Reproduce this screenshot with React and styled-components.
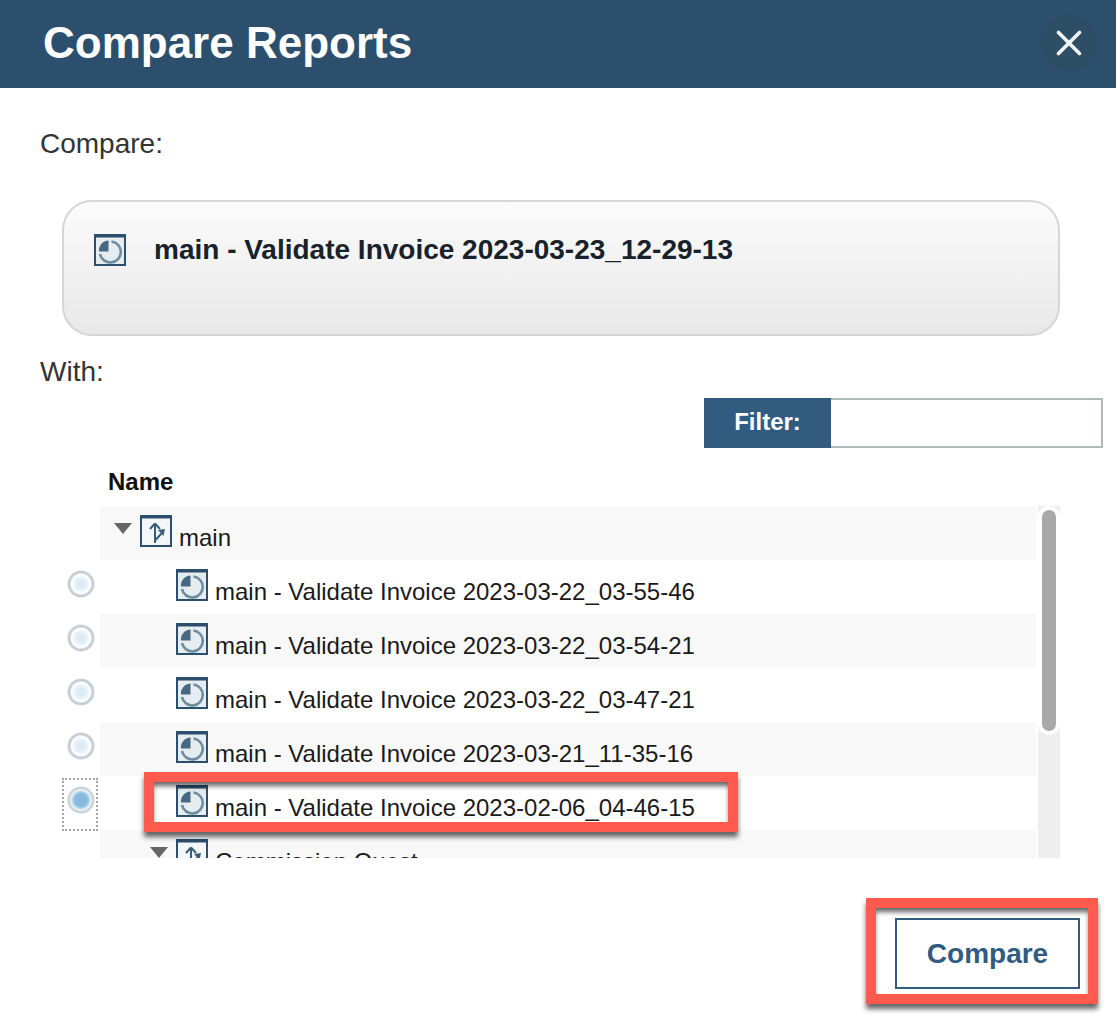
import styled, { createGlobalStyle } from "styled-components";

const GlobalStyle = createGlobalStyle`
  html, body {
    margin: 0;
    padding: 0;
    background: #fff;
    font-family: "Liberation Sans", Arial, sans-serif;
  }
`;

const reports = [
  { name: "main - Validate Invoice 2023-03-22_03-55-46" },
  { name: "main - Validate Invoice 2023-03-22_03-54-21" },
  { name: "main - Validate Invoice 2023-03-22_03-47-21" },
  { name: "main - Validate Invoice 2023-03-21_11-35-16" },
  { name: "main - Validate Invoice 2023-02-06_04-46-15", selected: true },
];

const Dialog = styled.div`
  position: relative;
  width: 1116px;
  height: 1028px;
  overflow: hidden;
  background: #fff;
`;

const Header = styled.header`
  display: flex;
  align-items: center;
  justify-content: space-between;
  height: 88px;
  padding: 0 19px 2px 43px;
  box-sizing: border-box;
  background: #2c4f6e;
`;

const Title = styled.h1`
  margin: 0;
  font-size: 44px;
  font-weight: 700;
  color: #fff;
`;

const CloseButton = styled.button`
  display: flex;
  align-items: center;
  justify-content: center;
  width: 56px;
  height: 56px;
  padding: 0;
  border: 0;
  border-radius: 50%;
  background: #2e4e66;
`;

const Content = styled.div`
  padding: 40px 13px 0 40px;
`;

const Label = styled.div`
  font-size: 28px;
  line-height: 32px;
  color: #333;
`;

const SourceCard = styled.div`
  display: flex;
  align-items: center;
  gap: 28px;
  width: 998px;
  height: 136px;
  box-sizing: border-box;
  margin: 40px 0 20px 22px;
  padding: 0 30px 36px;
  border: 2px solid #d6d6d6;
  border-radius: 30px;
  background: linear-gradient(#fbfbfb, #e8e8e8);
`;

const SourceName = styled.div`
  font-size: 28px;
  line-height: 32px;
  font-weight: 700;
  color: #18222b;
`;

const FilterRow = styled.div`
  display: flex;
  justify-content: flex-end;
  margin-top: 10px;
`;

const FilterLabel = styled.label`
  display: flex;
  align-items: center;
  justify-content: center;
  width: 127px;
  height: 50px;
  box-sizing: border-box;
  padding-bottom: 2px;
  font-size: 24px;
  font-weight: 700;
  color: #fff;
  background: #315c80;
`;

const FilterInput = styled.input`
  width: 272px;
  height: 50px;
  box-sizing: border-box;
  padding: 0 8px;
  border: 2px solid #acbaba;
  border-left: 0;
  outline: 0;
  background: #fff;
`;

const TableHead = styled.div`
  padding: 18px 0 0 68px;
  height: 40px;
  font-size: 24px;
  line-height: 32px;
  font-weight: 700;
  color: #111;
`;

const TreePane = styled.div`
  display: flex;
  align-items: stretch;
  height: 352px;
  overflow: hidden;
`;

const RadioColumn = styled.div`
  flex: 0 0 60px;
  box-sizing: border-box;
  padding: 51px 0 0 23px;
`;

const RadioSlot = styled.div`
  display: flex;
  align-items: center;
  justify-content: center;
  position: relative;
  width: 36px;
  height: 54px;
`;

const FocusRing = styled.div`
  position: absolute;
  left: -1px;
  top: 5px;
  width: 36px;
  height: 53px;
  box-sizing: border-box;
  border: 2px dotted #a6a6a6;
`;

const Radio = styled.span`
  display: block;
  width: 28px;
  height: 28px;
  border-radius: 50%;
  background: ${(p) =>
    p.$checked
      ? "radial-gradient(circle, #86b9de 0 6px, #a9cfe9 8px, #eef4f9 10px, #c6ced6 12px, #ccd4db 13px, #fff 14px)"
      : "radial-gradient(circle at 50% 50%, #dcecf7 0 4px, #eef5fa 7px, #fff 9.5px, #c2cad3 11.5px, #ccd3da 13px, #fff 14px)"};
`;

const Tree = styled.div`
  flex: 0 0 936px;
`;

const Row = styled.div`
  display: flex;
  align-items: flex-start;
  height: 54px;
  box-sizing: border-box;
  padding-left: ${(p) => p.$indent}px;
  background: ${(p) => (p.$shaded ? "#f8f8f8" : "#fff")};
`;

const Caret = styled.span`
  width: 0;
  height: 0;
  margin: 17px 8px 0 0;
  border-left: 9.5px solid transparent;
  border-right: 9.5px solid transparent;
  border-top: 11px solid #666;
`;

const RowIcon = styled.svg`
  flex: none;
  width: 32px;
  height: 32px;
  margin: ${(p) => (p.$flush ? "0" : "9px 7px 0 0")};
`;

const RowName = styled.span`
  padding-top: 17px;
  font-size: 24px;
  line-height: 30px;
  color: #1a1a1a;
  white-space: nowrap;
`;

const Scrollbar = styled.div`
  flex: 0 0 22px;
  margin-left: 2px;
  background: #eeeeee;
`;

const ScrollThumb = styled.div`
  width: 14px;
  height: 221px;
  margin: 4px 0 0 4px;
  border-radius: 7px;
  background: #a9a9a9;
  box-shadow: 0 0 0 4px #fff;
`;

const Footer = styled.div`
  display: flex;
  justify-content: flex-end;
  padding: 60px 23px 0 0;
`;

const CompareButton = styled.button`
  width: 185px;
  height: 71px;
  border: 2px solid #315c80;
  background: #fff;
  font-family: inherit;
  font-size: 28px;
  font-weight: 700;
  color: #315c80;
`;

const Callout = styled.div`
  position: absolute;
  left: ${(p) => p.$x}px;
  top: ${(p) => p.$y}px;
  width: ${(p) => p.$w}px;
  height: ${(p) => p.$h}px;
  box-sizing: border-box;
  border: 10px solid #ff5a4d;
  box-shadow: 0 5px 5px rgba(0, 0, 0, 0.6), inset 0 5px 5px -1px rgba(0, 0, 0, 0.6);
  pointer-events: none;
`;

function CloseIcon() {
  return (
    <svg width="26" height="26" viewBox="0 0 26 26" fill="none">
      <path
        d="M2.5 2.5l21 21M23.5 2.5l-21 21"
        stroke="#f2f5f6"
        strokeWidth="3.6"
        strokeLinecap="round"
      />
    </svg>
  );
}

function ReportIcon({ flush }) {
  return (
    <RowIcon viewBox="0 0 32 32" $flush={flush}>
      <rect x="1" y="1" width="30" height="30" fill="#e6edf1" stroke="#2c4f6e" strokeWidth="2" />
      <rect x="0" y="0" width="32" height="3.5" fill="#2c4f6e" />
      <path
        d="M17.5 7.5A10.5 10.5 0 1 1 6 20"
        fill="none"
        stroke="#6d8c9f"
        strokeWidth="2.6"
      />
      <path d="M14.5 6.5v11H5A9.8 9.8 0 0 1 14.5 6.5z" fill="#2c4f6e" opacity="0.85" />
    </RowIcon>
  );
}

function BranchIcon() {
  return (
    <RowIcon viewBox="0 0 32 32">
      <rect x="1" y="1" width="30" height="30" fill="#f4f7f9" stroke="#2c4f6e" strokeWidth="2" />
      <rect x="0" y="0" width="32" height="3.5" fill="#2c4f6e" />
      <path
        d="M15 28V9M15 8.5l-5 5.5M15 8.5l5 5.5M15.5 25l6-6.5"
        fill="none"
        stroke="#3a5d79"
        strokeWidth="2"
      />
      <path d="M18 15l7-1-1.5 7z" fill="#3a5d79" />
    </RowIcon>
  );
}

export default function App() {
  return (
    <Dialog>
      <GlobalStyle />
      <Header>
        <Title>Compare Reports</Title>
        <CloseButton aria-label="Close">
          <CloseIcon />
        </CloseButton>
      </Header>
      <Content>
        <Label>Compare:</Label>
        <SourceCard>
          <ReportIcon flush />
          <SourceName>main - Validate Invoice 2023-03-23_12-29-13</SourceName>
        </SourceCard>
        <Label>With:</Label>
        <FilterRow>
          <FilterLabel htmlFor="filter">Filter:</FilterLabel>
          <FilterInput id="filter" />
        </FilterRow>
        <TableHead>Name</TableHead>
        <TreePane>
          <RadioColumn>
            {reports.map((r) => (
              <RadioSlot key={r.name}>
                <Radio $checked={r.selected} />
                {r.selected && <FocusRing />}
              </RadioSlot>
            ))}
          </RadioColumn>
          <Tree>
            <Row $indent={14} $shaded>
              <Caret />
              <BranchIcon />
              <RowName>main</RowName>
            </Row>
            {reports.map((r, i) => (
              <Row key={r.name} $indent={76} $shaded={i % 2 === 1}>
                <ReportIcon />
                <RowName>{r.name}</RowName>
              </Row>
            ))}
            <Row $indent={50} $shaded>
              <Caret />
              <BranchIcon />
              <RowName>Commission Quest</RowName>
            </Row>
          </Tree>
          <Scrollbar>
            <ScrollThumb />
          </Scrollbar>
        </TreePane>
        <Footer>
          <CompareButton>Compare</CompareButton>
        </Footer>
      </Content>
      <Callout $x={144} $y={772} $w={594} $h={60} />
      <Callout $x={866} $y={898} $w={232} $h={106} />
    </Dialog>
  );
}
